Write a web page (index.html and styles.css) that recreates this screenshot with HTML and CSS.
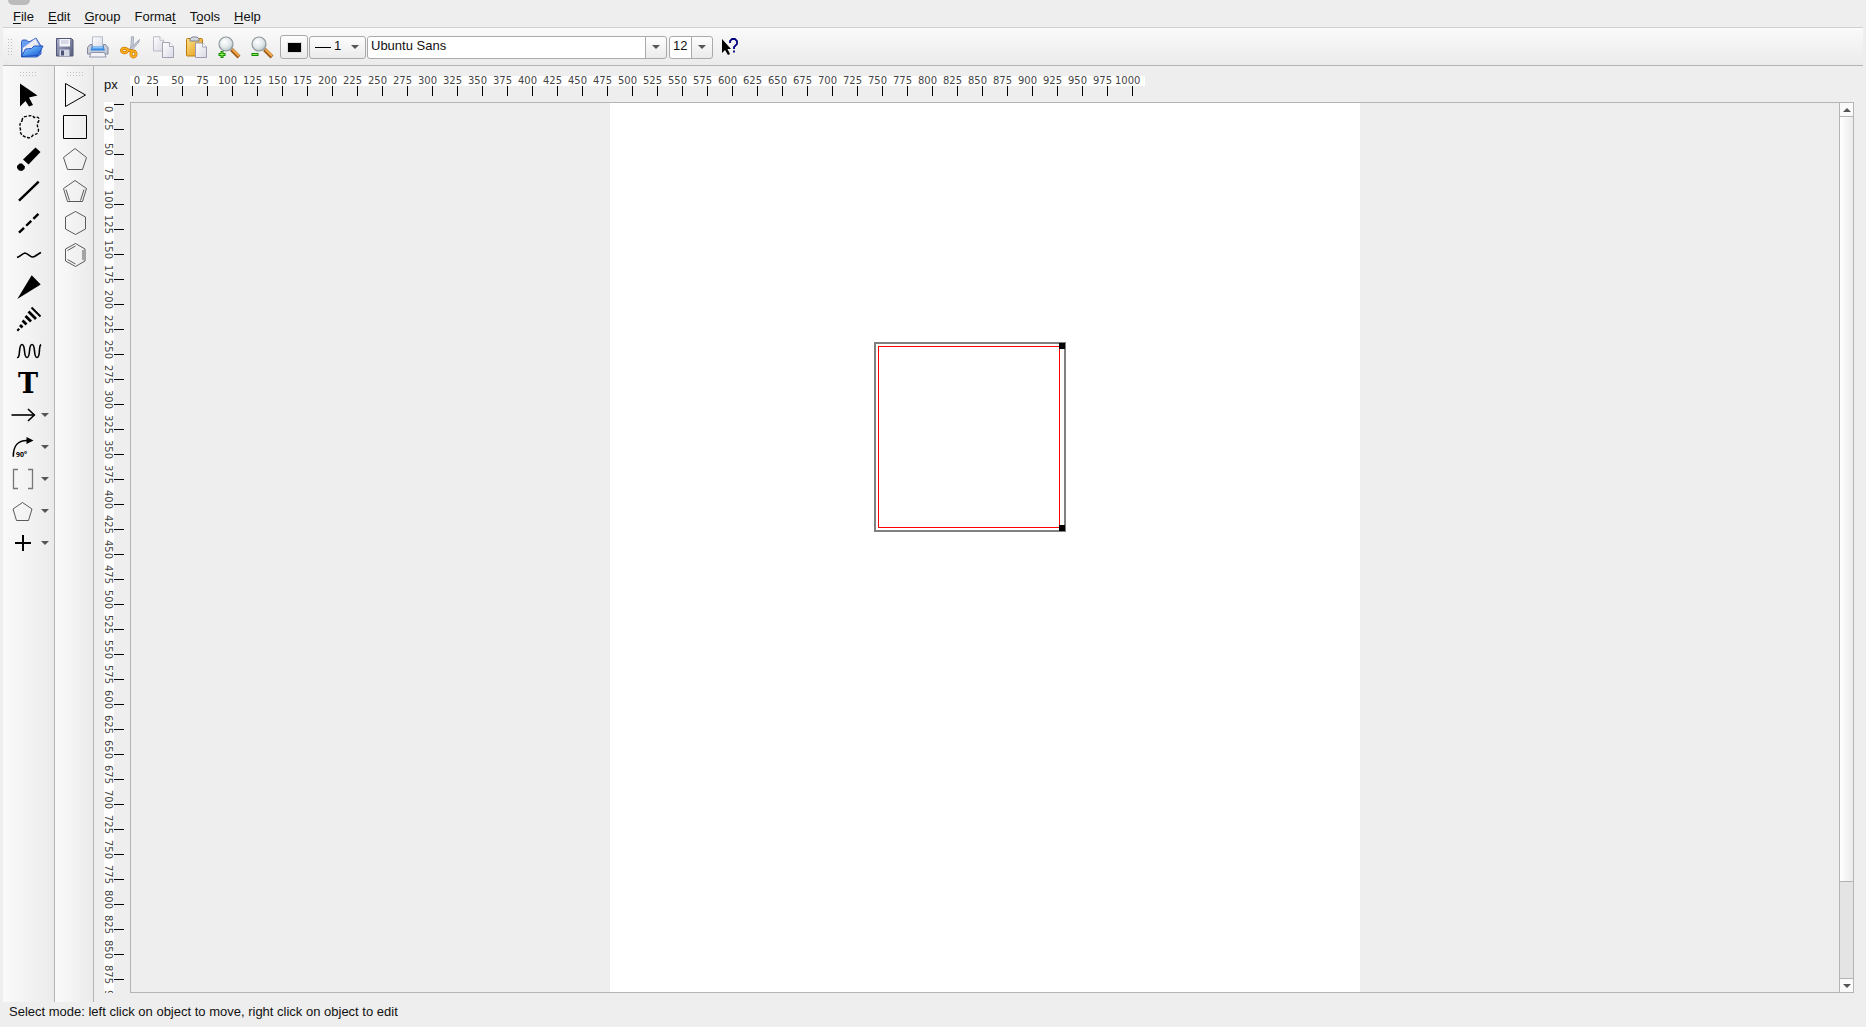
FILE: index.html
```html
<!DOCTYPE html>
<html lang="en">
<head>
  <meta charset="UTF-8">
  <meta name="viewport" content="width=device-width, initial-scale=1.0">
  <title>Drawing editor</title>
  <link rel="stylesheet" href="styles.css">
</head>
<body>
  <div class="window-tab"></div>

  <nav class="menubar">
    <button><u>F</u>ile</button>
    <button><u>E</u>dit</button>
    <button><u>G</u>roup</button>
    <button>Forma<u>t</u></button>
    <button>T<u>o</u>ols</button>
    <button><u>H</u>elp</button>
  </nav>

  <div class="toolbar">
    <div class="handle"></div>
    <button class="tool" aria-label="Open">
      <svg viewBox="0 0 24 24">
        <defs>
          <linearGradient id="blue" x1="0" y1="0" x2="1" y2="1"><stop offset="0" stop-color="#b5dcff"/><stop offset=".5" stop-color="#4a94ee"/><stop offset="1" stop-color="#1550c8"/></linearGradient>
          <linearGradient id="metal" x1="0" y1="0" x2="1" y2="1"><stop offset="0" stop-color="#a9aec8"/><stop offset="1" stop-color="#545b7c"/></linearGradient>
          <linearGradient id="sheet" x1="0" y1="0" x2="1" y2="1"><stop offset="0" stop-color="#fff"/><stop offset="1" stop-color="#d9d9e6"/></linearGradient>
          <linearGradient id="gold" x1="0" y1="0" x2="1" y2="1"><stop offset="0" stop-color="#ffe08a"/><stop offset="1" stop-color="#e09a10"/></linearGradient>
          <radialGradient id="lens" cx=".4" cy=".35" r=".7"><stop offset="0" stop-color="#fff"/><stop offset=".6" stop-color="#dfe6e8"/><stop offset="1" stop-color="#b0bcc0"/></radialGradient>
        </defs>
        <path d="M1.500 5.500l1-1.500h4l1.500 1.500h2L16 2l5 8v8l-4 3H1.500z" fill="#6a9cf0" stroke="#1a49b8" stroke-width=".8"/>
        <path d="M2.500 12L15.500 2.500l4.500 8-3 6H2.500z" fill="url(#sheet)" stroke="#7d9bd8" stroke-width=".6"/>
        <path d="M1.500 20.500L5.500 13l6-.5 2.500-2.500h9l-5 9.500z" fill="url(#blue)" stroke="#1646b8" stroke-width=".9"/>
      </svg>
    </button>
    <button class="tool" aria-label="Save">
      <svg viewBox="0 0 24 24">
        <path d="M3.500 2.500h15l1.500 1.500v16H3.500z" fill="url(#metal)" stroke="#4f5677"/>
        <path d="M6.500 3h10.500v7.500H6.500z" fill="#f3f4fa"/>
        <path d="M8 5h7.500M8 7h7.500" stroke="#b9bdd0"/>
        <path d="M6.500 13.500h10v6.500h-10z" fill="#d3d7e4"/>
        <path d="M8 14.500h3v5H8z" fill="#4b5377"/>
      </svg>
    </button>
    <button class="tool" aria-label="Print">
      <svg viewBox="0 0 24 24">
        <path d="M6.500.8h10V12h-10z" fill="url(#sheet)" stroke="#a2adc4" stroke-width=".8"/>
        <path d="M4 8.500l-2.500 3V18h20.500v-6.500l-2.500-3h-2V12H6V8.500z" fill="#c8cbd8" stroke="#777d94" stroke-width=".9"/>
        <path d="M6 10.500h11.500L19 14.500H4.500z" fill="#3388e0"/>
        <path d="M7 10.500h9.500l.8 2H6.200z" fill="#8bc4fa"/>
        <path d="M5 16.500h13.500l1.500 4.500H3.500z" fill="#f2f3f8" stroke="#7e8499" stroke-width=".8"/>
      </svg>
    </button>
    <button class="tool" aria-label="Cut">
      <svg viewBox="0 0 24 24">
        <path d="M12.500.8l2 0L14 12l-2.500 3z" fill="#d5d9e2" stroke="#858da2" stroke-width=".7"/>
        <path d="M20.500 3.500l-1 3L12 15l-2.500-1z" fill="#c9cedb" stroke="#858da2" stroke-width=".7"/>
        <g fill="none" stroke="#c87500" stroke-width="3"><ellipse cx="5.500" cy="14.500" rx="3" ry="2.300"/><ellipse cx="14.500" cy="18" rx="2.500" ry="3"/><path d="M8.500 14l5 1"/></g>
        <g fill="none" stroke="#ffb21c" stroke-width="1.600"><ellipse cx="5.500" cy="14.500" rx="3" ry="2.300"/><ellipse cx="14.500" cy="18" rx="2.500" ry="3"/><path d="M8.500 14l5 1"/></g>
      </svg>
    </button>
    <button class="tool" aria-label="Copy">
      <svg viewBox="0 0 24 24">
        <path d="M1.500.8h6.500l3.500 3.500V15h-10z" fill="url(#sheet)" stroke="#b3b3c2" stroke-width=".9"/>
        <path d="M8 .8v3.500h3.500" fill="#fff" stroke="#b3b3c2" stroke-width=".8"/>
        <path d="M10.500 6.500h7l4 4V21.500h-11z" fill="url(#sheet)" stroke="#9999ab" stroke-width=".9"/>
        <path d="M17.500 6.500v4h4" fill="#fff" stroke="#9999ab" stroke-width=".8"/>
      </svg>
    </button>
    <button class="tool" aria-label="Paste">
      <svg viewBox="0 0 24 24">
        <rect x="1.500" y="2.500" width="16" height="17.500" rx="1" fill="url(#gold)" stroke="#b97a0a"/>
        <path d="M5 5V3l2-2h5l2 2v2z" fill="#d5d8e0" stroke="#72788a" stroke-width=".9"/>
        <path d="M10.500 7h7l4 4V21.500h-11z" fill="url(#sheet)" stroke="#9393ad" stroke-width=".9"/>
        <path d="M17.500 7v4h4" fill="#fff" stroke="#9393ad" stroke-width=".8"/>
      </svg>
    </button>
    <button class="tool" aria-label="Zoom in">
      <svg viewBox="0 0 24 24">
        <path d="M13.500 13.500l7.500 7.500" stroke="#9a5d1c" stroke-width="4"/>
        <path d="M14.500 13.500l6.500 6.500" stroke="#f6a94a" stroke-width="2"/>
        <circle cx="8" cy="8" r="7" fill="url(#lens)" stroke="#8d979b" stroke-width="1.200"/>
        <path d="M.5 18.500h7M4 15v7" stroke="#128a08" stroke-width="3"/>
        <path d="M1.500 18.500h5M4 16v5" stroke="#8fef4c" stroke-width="1"/>
      </svg>
    </button>
    <button class="tool" aria-label="Zoom out">
      <svg viewBox="0 0 24 24">
        <path d="M13.500 13.500l7.500 7.500" stroke="#9a5d1c" stroke-width="4"/>
        <path d="M14.500 13.500l6.500 6.500" stroke="#f6a94a" stroke-width="2"/>
        <circle cx="8" cy="8" r="7" fill="url(#lens)" stroke="#8d979b" stroke-width="1.200"/>
        <path d="M.5 18.500h7" stroke="#128a08" stroke-width="3"/>
        <path d="M1.500 18.500h5" stroke="#8fef4c" stroke-width="1"/>
      </svg>
    </button>
    <button class="color-button" aria-label="Color"><span class="swatch"></span></button>
    <div class="combo combo-line">
      <span class="line-sample"></span>
      <select aria-label="Line width"><option>1</option><option>2</option><option>3</option></select>
      <span class="combo-arrow"></span>
    </div>
    <div class="combo combo-edit combo-font">
      <select aria-label="Font"><option>Ubuntu Sans</option></select>
      <span class="combo-arrow"></span>
    </div>
    <div class="combo combo-edit combo-size">
      <select aria-label="Font size"><option>12</option><option>14</option></select>
      <span class="combo-arrow"></span>
    </div>
    <button class="tool" aria-label="What's this?">
      <svg viewBox="0 0 24 24">
        <path d="M4 3v14l3-3 3 5 2-1-2.500-5H13z"/>
        <path d="M12 7V5l2-2h3l2 2v3l-3 3v2M16 14.500v2" fill="none" stroke="#000080" stroke-width="1.800"/>
      </svg>
    </button>
  </div>

  <div class="workspace">
    <div class="side-toolbar draw-tools">
      <div class="handle handle-wide"></div>
      <button aria-label="Select"><svg viewBox="0 0 24 24"><path d="M4 .5v23l5.500-5.500 3.500 5.500 4-1.500-4-7.500 8.500-2z"/></svg></button>
      <button aria-label="Lasso"><svg viewBox="0 0 24 24"><path d="M6 6c0-3 2-5 5-4.500 4-1.500 6-1 7 1 4-1 6 0 4.500 4-2 3-1 5 0 8 0 4-2 5-5 5-2 3-4 4-6 3-5-1-8-4-7-8-1-4-1-6 1.500-8.500z" class="dashed"/></svg></button>
      <button aria-label="Erase"><svg viewBox="0 0 24 24"><path d="M19.500.5l5 4.500L12.500 17.500 7 12.500z"/><path d="M3.500 16.500H6L9 19.500 8.500 22l-2.500 2-3-.5L1 21v-2z"/></svg></button>
      <button aria-label="Line"><svg viewBox="0 0 24 24"><path d="M3 21.700L22.700 2.700" class="thick"/></svg></button>
      <button aria-label="Dashed line"><svg viewBox="0 0 24 24"><path d="M3 21.700L22.700 2.700" class="thick" stroke-dasharray="7 3"/></svg></button>
      <button aria-label="Wavy line"><svg viewBox="0 0 24 24"><path d="M1 14.500c4-1 5-4 8-4.500 4 1 5 4 8 4 3-1 5-3 8-4.500" class="medium"/></svg></button>
      <button aria-label="Wedge"><svg viewBox="0 0 24 24"><path d="M1.300 24L15.700.3l9 9.200z"/></svg></button>
      <button aria-label="Hashed wedge"><svg viewBox="0 0 24 24"><path d="M15.500.5l9 9" class="heavy"/><path d="M12.500 4.500l7.500 7.500M9.500 9l5.500 5.500M6.500 13.500l4 4M4 18l2.500 2.500M1.500 22l1.500 1.500" class="hash"/></svg></button>
      <button aria-label="Squiggle"><svg viewBox="0 0 24 24"><path d="M1 18.500c4 1 1-13 5-13s1 13 5 13 1-13 5-13 1 13 5 13 1-11 4-13" class="medium"/></svg></button>
      <button class="text-tool" aria-label="Text">T</button>
      <button class="has-menu" aria-label="Arrow"><svg viewBox="0 0 24 24"><path d="M.5 12h23" class="medium"/><path d="M17 6l6.300 6L17 18" class="medium"/></svg><span class="menu-arrow"></span></button>
      <button class="has-menu" aria-label="Curved arrow"><svg viewBox="0 0 24 24"><path d="M2.300 21.700C2.300 11 6 5.500 16 5.500" class="medium"/><path d="M15.500 2l7 3.500-7 3.500z"/><text x="5" y="22">90°</text></svg><span class="menu-arrow"></span></button>
      <button class="has-menu" aria-label="Bracket"><svg viewBox="0 0 24 24"><path d="M7 2.500H2.500v19H7M17 2.500h4.500v19H17" class="gray"/></svg><span class="menu-arrow"></span></button>
      <button class="has-menu" aria-label="Ring"><svg viewBox="0 0 24 24"><path d="M11.500 3.500l9.500 6.500-3.500 11.500h-12L2 10z" class="thin"/></svg><span class="menu-arrow"></span></button>
      <button class="has-menu" aria-label="Symbol"><svg viewBox="0 0 24 24"><path d="M12 4v16M4 12h16" class="heavy"/></svg><span class="menu-arrow"></span></button>
    </div>

    <div class="side-toolbar ring-tools">
      <div class="handle handle-wide"></div>
      <button aria-label="Cyclopropane"><svg viewBox="0 0 24 24"><path d="M2.500.5v23l20-11.500z" class="outline"/></svg></button>
      <button aria-label="Cyclobutane"><svg viewBox="0 0 24 24"><path d="M.5.5h23v23H.5z" class="outline"/></svg></button>
      <button aria-label="Cyclopentane"><svg viewBox="0 0 24 24"><path d="M12 1.500l11.500 9-4 12h-15l-4-12z" class="thin"/></svg></button>
      <button aria-label="Cyclopentadiene"><svg viewBox="0 0 24 24"><path d="M12 1.500l11.500 8-4 13h-15l-4-13zM21 10.500l-3.500 11M3 10.500l3.500 11" class="thin"/></svg></button>
      <button aria-label="Cyclohexane"><svg viewBox="0 0 24 24"><path d="M12.500.5l10 5.500v12l-10 5.500-10-5.500V6z" class="thin"/></svg></button>
      <button aria-label="Benzene"><svg viewBox="0 0 24 24"><path d="M12.500.5l9.500 5.500v12l-9.500 5.500-10-5.500V6zM4.500 7.500l8-4.500M20 7v10M4.500 16.500l8 4.500" class="thin"/></svg></button>
    </div>

    <main class="editor">
      <div class="unit">px</div>
      <div class="ruler ruler-h">
        <div class="labels" id="rulerTop"></div>
        <div class="ticks"></div>
      </div>
      <div class="ruler ruler-v">
        <div class="labels" id="rulerLeft"></div>
        <div class="ticks"></div>
      </div>
      <div class="view">
        <div class="canvas">
          <div class="page">
            <svg class="shape" viewBox="0 0 192 190">
              <rect x="1" y="1" width="190" height="188" class="selection"/>
              <rect x="4.500" y="4.500" width="181" height="181" class="bonds"/>
              <rect x="185" y="1" width="6" height="6"/>
              <rect x="185" y="183" width="6" height="6"/>
            </svg>
          </div>
        </div>
        <div class="scrollbar">
          <button class="scroll-button up" aria-label="Scroll up"></button>
          <div class="scroll-thumb"></div>
          <div class="scroll-trough"></div>
          <button class="scroll-button down" aria-label="Scroll down"></button>
        </div>
      </div>
    </main>
  </div>

  <footer class="statusbar">Select mode: left click on object to move, right click on object to edit</footer>

  <script>
    function fillRuler(id, max) {
      const ruler = document.getElementById(id);
      for (let n = 0; n <= max; n += 25) {
        const label = document.createElement("span");
        label.textContent = n;
        ruler.appendChild(label);
      }
    }

    fillRuler("rulerTop", 1000);
    fillRuler("rulerLeft", 900);
  </script>
</body>
</html>
```

FILE: styles.css
```css
* {
  box-sizing: border-box;
}
body {
  margin: 0;
  height: 100vh;
  display: flex;
  flex-direction: column;
  overflow: hidden;
  background: #eee;
  color: #111;
  font: 13px "Liberation Sans", Arial, sans-serif;
}
button, select {
  font: inherit;
  color: inherit;
  margin: 0;
  padding: 0;
  border: none;
  background: none;
}
svg {
  display: block;
  width: 24px;
  height: 24px;
  overflow: visible;
}

/* menu */
.window-tab {
  position: absolute;
  left: 8px;
  top: 0;
  width: 22px;
  height: 5px;
  background: #bbb;
  border-radius: 0 0 6px 6px;
}
.menubar {
  display: flex;
  gap: 14px;
  height: 27px;
  padding: 6px 13px 0;
}
.menubar u {
  text-underline-offset: 2px;
}

/* top toolbar */
.toolbar {
  display: flex;
  align-items: center;
  gap: 1px;
  height: 39px;
  margin: 0 3px;
  padding-left: 5px;
  padding-top: 1px;
  border-top: 1px solid #d0d0d0;
  border-bottom: 1px solid #b4b4b4;
  background: linear-gradient(#fafafa, #ebebeb);
}
.handle {
  width: 5px;
  height: 17px;
  margin-right: 2px;
  background: conic-gradient(#c4c4c4 25%, transparent 0) 0 0 / 3px 3px;
  background: linear-gradient(#c4c4c4, #c4c4c4) 0 0 / 0 0, repeating-conic-gradient(from 0deg at 1px 1px, transparent 0 75%, #c0c0c0 0 100%) 0 0 / 3px 3px;
}
.tool {
  display: flex;
  align-items: center;
  justify-content: center;
  width: 32px;
  height: 32px;
  padding-top: 2px;
}
.color-button {
  display: flex;
  align-items: center;
  justify-content: center;
  width: 28px;
  height: 24px;
  border: 1px solid #aaa;
  border-radius: 3px;
  background: linear-gradient(#fdfdfd, #ebebeb);
}
.swatch {
  width: 13px;
  height: 9px;
  background: #000;
  outline: 1px solid #ddd;
}
.combo {
  display: flex;
  align-items: stretch;
  height: 23px;
  border: 1px solid #aaa;
  border-radius: 3px;
  background: linear-gradient(#fdfdfd, #ebebeb);
}
.combo select {
  flex: 1;
  min-width: 0;
  padding-left: 3px;
  padding-bottom: 3px;
  appearance: none;
}
.combo-arrow {
  display: flex;
  align-items: center;
  justify-content: center;
  width: 21px;
}
.combo-arrow::before, .menu-arrow {
  content: "";
  border: 4px solid transparent;
  border-top-color: #555;
  border-bottom: none;
}
.combo-line {
  width: 57px;
}
.line-sample {
  align-self: center;
  width: 16px;
  height: 1px;
  margin-left: 5px;
  background: #000;
}
.combo-edit select {
  background: #fff;
  border-radius: 3px 0 0 3px;
}
.combo-edit .combo-arrow {
  border-left: 1px solid #aaa;
}
.combo-font {
  width: 300px;
}
.combo-size {
  width: 44px;
  margin-left: 1px;
}

/* left toolbars */
.workspace {
  flex: 1;
  min-height: 0;
  display: flex;
  padding-left: 3px;
}
.side-toolbar {
  display: flex;
  flex-direction: column;
  align-items: center;
  border-right: 1px solid #b4b4b4;
  background: linear-gradient(90deg, #fafafa, #ebebeb);
}
.draw-tools {
  width: 52px;
  padding-right: 1px;
}
.ring-tools {
  width: 39px;
  padding-left: 2px;
}
.handle-wide {
  width: 17px;
  height: 5px;
  margin: 6px 0 2px;
}
.side-toolbar button {
  display: flex;
  align-items: center;
  justify-content: center;
  width: 100%;
  height: 32px;
}
.side-toolbar .has-menu {
  gap: 6px;
  padding-left: 3px;
}
.side-toolbar .text-tool {
  font: bold 27px "DejaVu Serif", serif;
  color: #000;
}
.side-toolbar text {
  font: bold 7px "Open Sans", sans-serif;
}
.thin, .outline, .medium, .thick, .heavy, .hash, .gray, .dashed {
  fill: none;
  stroke: #000;
}
.thin {
  stroke: #333;
  stroke-width: 0.8;
}
.gray {
  stroke: #777;
  stroke-width: 1.3;
}
.medium {
  stroke-width: 1.6;
}
.heavy {
  stroke-width: 2;
}
.thick {
  stroke-width: 2.4;
}
.hash {
  stroke-width: 2.8;
}
.dashed {
  stroke-width: 1.4;
  stroke-dasharray: 3 1.5;
}

/* rulers and canvas */
.editor {
  flex: 1;
  min-width: 0;
  display: grid;
  grid-template-columns: 36px 1fr;
  grid-template-rows: 36px 1fr;
  padding: 0 12px 9px 0;
}
.unit {
  padding: 11px 0 0 10px;
}
.ruler {
  display: flex;
  overflow: hidden;
  color: #444;
  font: 10px/10px "DejaVu Sans", sans-serif;
}
.labels {
  display: flex;
  background: #fff;
}
.labels span {
  flex: none;
  text-align: center;
}
.labels span:first-child {
  text-align: end;
}
.ruler-h {
  flex-direction: column;
  align-items: flex-start;
  padding-top: 10px;
}
.ruler-h .labels {
  height: 10px;
  padding-right: 5px;
}
.ruler-h span {
  width: 25px;
}
.ruler-h span:first-child {
  width: 10px;
}
.ruler-h .ticks {
  width: 1005px;
  height: 10px;
  margin-left: 2px;
  background: repeating-linear-gradient(90deg, #000 0 1px, transparent 1px 25px);
}
.ruler-v {
  min-height: 0;
  padding-left: 10px;
  line-height: 9px;
}
.ruler-v .labels {
  flex-direction: column;
  align-items: flex-start;
  width: 10px;
  height: 100%;
  overflow: hidden;
}
.ruler-v span {
  height: 25px;
  writing-mode: vertical-rl;
}
.ruler-v span:first-child {
  height: 10px;
}
.ruler-v .ticks {
  width: 10px;
  margin-top: 2px;
  background: repeating-linear-gradient(#000 0 1px, transparent 1px 25px);
}
.view {
  min-height: 0;
  display: flex;
  border: 1px solid #b4b4b4;
}
.canvas {
  flex: 1;
  display: flex;
  justify-content: center;
  overflow: hidden;
}
.page {
  position: relative;
  width: 750px;
  background: #fff;
}
.shape {
  position: absolute;
  left: 264px;
  top: 239px;
  width: 192px;
  height: 190px;
}
.selection {
  fill: none;
  stroke: #808080;
  stroke-width: 2;
}
.bonds {
  fill: none;
  stroke: #f00;
}

/* scroll bar */
.scrollbar {
  display: flex;
  flex-direction: column;
  width: 14px;
  border-left: 1px solid #b4b4b4;
}
.scroll-button {
  display: flex;
  align-items: center;
  justify-content: center;
  height: 13px;
  background: #fafafa;
}
.scroll-button::before {
  content: "";
  border: 4px solid transparent;
}
.up::before {
  border-bottom-color: #555;
  border-top: none;
}
.down::before {
  border-top-color: #555;
  border-bottom: none;
}
.scroll-thumb {
  flex: 8;
  border: 1px solid #b4b4b4;
  border-width: 1px 0;
  background: linear-gradient(90deg, #fff, #ebebeb);
}
.scroll-trough {
  flex: 1;
  border-bottom: 1px solid #b4b4b4;
  background: #e4e4e4;
}

.statusbar {
  height: 25px;
  padding: 2px 9px;
}
```
